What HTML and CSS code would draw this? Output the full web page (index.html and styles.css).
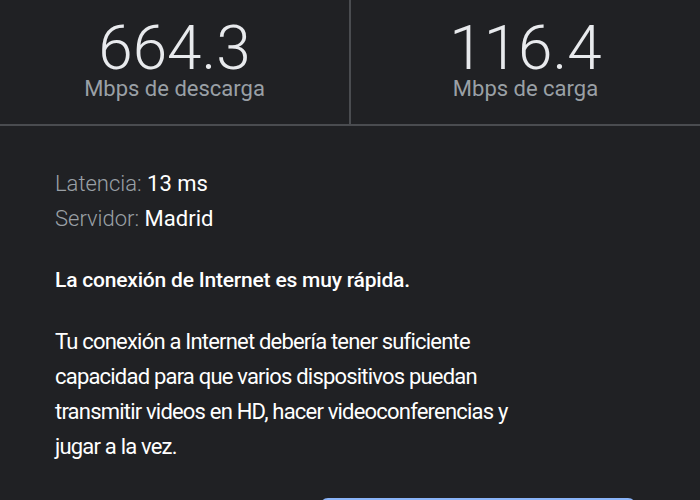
FILE: index.html
```html
<!DOCTYPE html>
<html lang="es">
<head>
    <meta charset="UTF-8">
    <meta name="viewport" content="width=device-width, initial-scale=1.0">
    <title>Prueba de velocidad</title>
    <link rel="stylesheet" href="styles.css">
</head>
<body>

<div class="results">
    <div class="stat">
        <div class="stat-value">664.3</div>
        <div class="stat-label">Mbps de descarga</div>
    </div>
    <div class="stat">
        <div class="stat-value">116.4</div>
        <div class="stat-label">Mbps de carga</div>
    </div>
</div>

<div class="details">
    <div class="meta">
        <div><span class="meta-key">Latencia:</span> 13 ms</div>
        <div><span class="meta-key">Servidor:</span> Madrid</div>
    </div>

    <p class="summary">La conexión de Internet es muy rápida.</p>

    <p class="description">Tu conexión a Internet debería tener suficiente capacidad para que varios dispositivos puedan transmitir videos en HD, hacer videoconferencias y jugar a la vez.</p>

    <div class="actions">
        <button class="btn-primary">Volver a probar</button>
    </div>
</div>

</body>
</html>
```

FILE: styles.css
```css
body {
    margin: 0;
    background-color: #202124;
    color: #e8eaed;
    font-family: Roboto, "Liberation Sans", sans-serif;
}
.results {
    display: flex;
    border-bottom: 2px solid #4a4c50;
}
.stat {
    flex: 1;
    height: 124px;
    text-align: center;
    padding-top: 15px;
    box-sizing: border-box;
}
.stat + .stat {
    border-left: 2px solid #4a4c50;
}
.stat-value {
    font-size: 62px;
    font-weight: 300;
    line-height: 66px;
    color: #e8eaed;
}
.stat-label {
    margin-top: -4px;
    font-size: 22px;
    line-height: 24px;
    color: #9aa0a6;
}
.details {
    padding: 40px 0 0 55px;
}
.meta {
    font-size: 22px;
    line-height: 35px;
    color: #ffffff;
}
.meta-key {
    color: #9aa0a6;
    font-weight: 300;
}
.summary {
    margin: 32px 0 0;
    font-size: 21px;
    font-weight: 500;
    letter-spacing: -0.2px;
    color: #ffffff;
}
.description {
    margin: 32px 0 0;
    width: 480px;
    font-size: 22px;
    line-height: 35px;
    letter-spacing: -0.8px;
    color: #ffffff;
}
.actions {
    padding: 34px 0 0 265px;
}
.btn-primary {
    width: 316px;
    height: 44px;
    border: none;
    border-radius: 8px;
    background-color: #8ab4f8;
    color: #202124;
    font-family: inherit;
    font-size: 18px;
    font-weight: 500;
}
```
